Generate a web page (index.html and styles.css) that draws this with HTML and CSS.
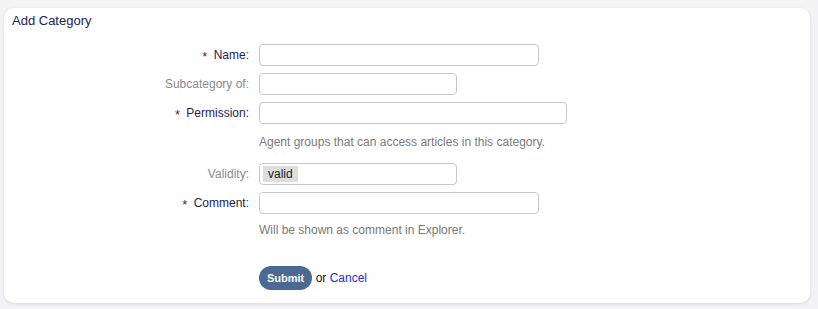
FILE: index.html
```html
<!DOCTYPE html>
<html lang="en">
<head>
    <meta charset="UTF-8">
    <title>Add Category</title>
    <link rel="stylesheet" href="styles.css">
</head>
<body>
    <div class="card">
        <h2 class="card-title">Add Category</h2>
        <form class="form">
            <div class="row">
                <label class="label required"><span class="star">*</span> Name:</label>
                <input class="field w-280" type="text">
            </div>
            <div class="row">
                <label class="label muted">Subcategory of:</label>
                <input class="field w-198" type="text">
            </div>
            <div class="row">
                <label class="label required"><span class="star">*</span> Permission:</label>
                <input class="field w-308" type="text">
            </div>
            <div class="row help-row">
                <span class="label"></span>
                <p class="help">Agent groups that can access articles in this category.</p>
            </div>
            <div class="row">
                <label class="label muted">Validity:</label>
                <div class="field w-198 select"><span class="chip">valid</span></div>
            </div>
            <div class="row">
                <label class="label required"><span class="star">*</span> Comment:</label>
                <input class="field w-280" type="text">
            </div>
            <div class="row help-row help-tight">
                <span class="label"></span>
                <p class="help">Will be shown as comment in Explorer.</p>
            </div>
            <div class="row actions">
                <span class="label"></span>
                <div>
                    <button class="submit" type="button">Submit</button>
                    <span class="or">or</span>
                    <a class="cancel" href="#">Cancel</a>
                </div>
            </div>
        </form>
    </div>
</body>
</html>
```
FILE: styles.css
```css
body {
    margin: 0;
    padding: 8px 8px 6px 4px;
    background: #f3f3f6;
    font-family: "Liberation Sans", Arial, sans-serif;
    font-size: 12px;
}

.card {
    background: #ffffff;
    border-radius: 10px;
    box-shadow: 0 1px 3px rgba(60, 60, 100, 0.15);
    height: 295px;
    box-sizing: border-box;
    padding: 5px 0 0 0;
}

.card-title {
    margin: 0 0 0 8px;
    font-size: 13px;
    font-weight: normal;
    line-height: 16px;
    color: #1c2452;
}

.form {
    margin-top: 15px;
}

.row {
    display: flex;
    align-items: center;
    gap: 10px;
    margin-bottom: 7px;
}

.label {
    width: 245px;
    flex-shrink: 0;
    text-align: right;
    line-height: 22px;
}

.required {
    color: #1c2452;
}

.star {
    color: #5a1a4a;
    font-size: 13px;
    position: relative;
    top: 2px;
    margin-right: 3px;
}

.muted {
    color: #8a8a8a;
}

.field {
    height: 22px;
    box-sizing: border-box;
    border: 1px solid #c8c8c8;
    border-radius: 4px;
    background: #fff;
    margin: 0;
    padding: 0 4px;
    font: inherit;
}

.w-280 { width: 280px; }
.w-198 { width: 198px; }
.w-308 { width: 308px; }

.select {
    display: flex;
    align-items: center;
    padding: 0 3px;
}

.chip {
    background: #dddddd;
    color: #222;
    padding: 0 5px;
    line-height: 16px;
    border-radius: 1px;
}

.help-row {
    margin-top: 11px;
    margin-bottom: 0;
}

.help-row.help-tight {
    margin-top: 9px;
}

.help-row + .row {
    margin-top: 14px;
}

.help {
    margin: 0;
    color: #7a7a7a;
    line-height: 14px;
}

.help-row + .actions {
    margin-top: 29px;
}

.submit {
    background: #4b6a91;
    color: #fff;
    border: none;
    border-radius: 12px;
    height: 24px;
    padding: 0 8px;
    font: bold 11px "Liberation Sans", Arial, sans-serif;
}

.or {
    color: #111;
}

.cancel {
    color: #2a2ad6;
    text-decoration: none;
}
```
